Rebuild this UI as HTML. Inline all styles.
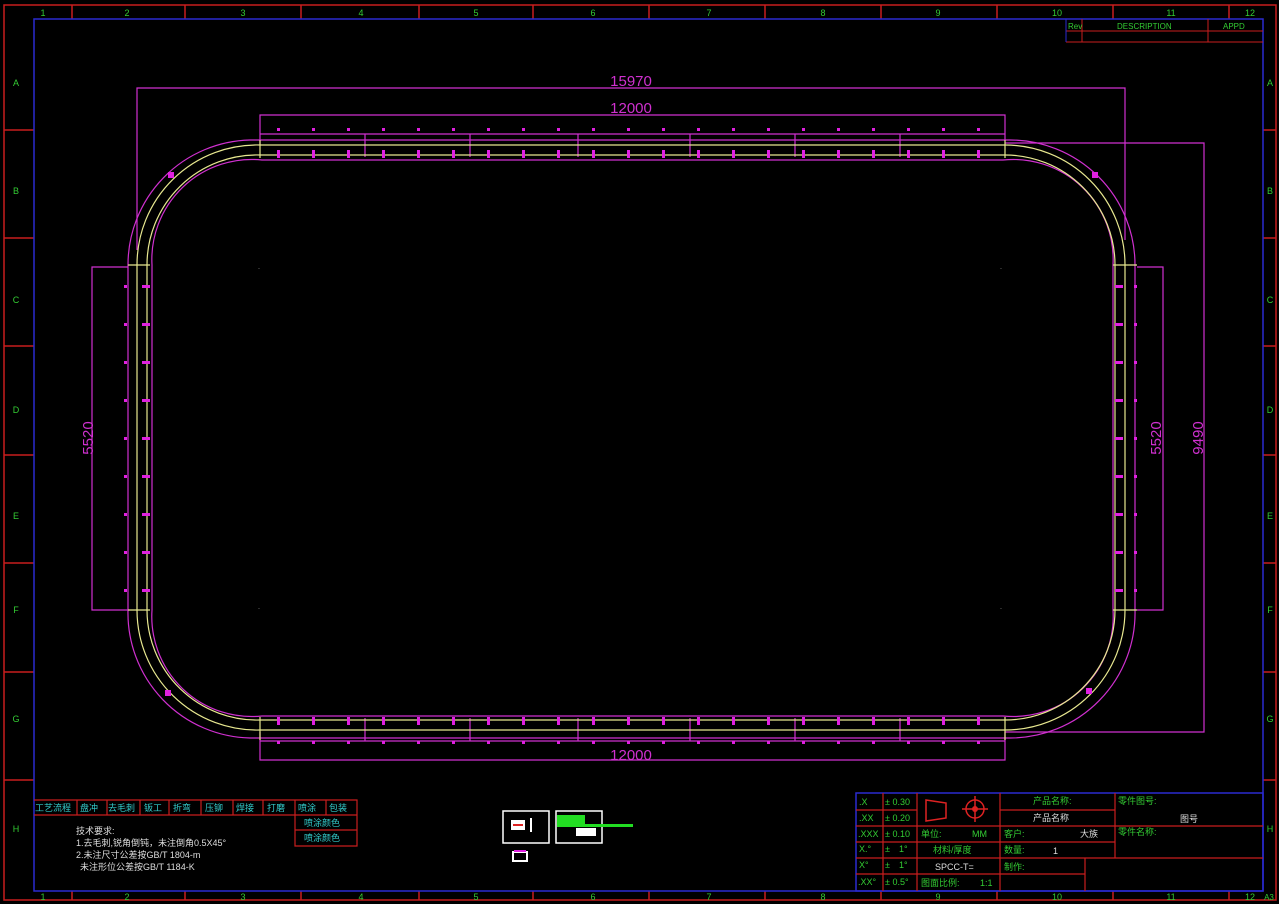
<!DOCTYPE html>
<html><head><meta charset="utf-8"><style>
html,body{margin:0;padding:0;background:#000;width:1279px;height:904px;overflow:hidden}
svg{display:block}
text{font-family:"Liberation Sans","Noto Sans CJK SC",sans-serif}
</style></head><body>
<svg width="1279" height="904" viewBox="0 0 1279 904" xmlns="http://www.w3.org/2000/svg">
<defs>
<pattern id="tk" x="260" y="0" width="35" height="904" patternUnits="userSpaceOnUse">
<rect x="17" y="0" width="3" height="904" fill="#e020e0"/>
</pattern>
<pattern id="tkv" x="0" y="267" width="904" height="38" patternUnits="userSpaceOnUse">
<rect x="0" y="18" width="904" height="3" fill="#e020e0"/>
</pattern>
</defs>
<rect width="1279" height="904" fill="#000"/>
<!-- outer red frame -->
<g stroke="#c81e1e" stroke-width="1.5" fill="none">
<rect x="4" y="5" width="1272" height="895"/>
<path d="M72 5V19M185 5V19M301 5V19M419 5V19M533 5V19M649 5V19M765 5V19M881 5V19M997 5V19M1113 5V19M1229 5V19"/>
<path d="M72 891V900M185 891V900M301 891V900M419 891V900M533 891V900M649 891V900M765 891V900M881 891V900M997 891V900M1113 891V900M1229 891V900"/>
<path d="M4 130H34M4 238H34M4 346H34M4 455H34M4 563H34M4 672H34M4 780H34"/>
<path d="M1263 130H1276M1263 238H1276M1263 346H1276M1263 455H1276M1263 563H1276M1263 672H1276M1263 780H1276"/>
</g>
<rect x="34" y="19" width="1229" height="872" fill="none" stroke="#2a2ad0" stroke-width="1.5"/>
<g fill="#3c3" font-size="9" text-anchor="middle">
<text x="43" y="16">1</text><text x="127" y="16">2</text><text x="243" y="16">3</text><text x="361" y="16">4</text><text x="476" y="16">5</text><text x="593" y="16">6</text><text x="709" y="16">7</text><text x="823" y="16">8</text><text x="938" y="16">9</text><text x="1057" y="16">10</text><text x="1171" y="16">11</text><text x="1250" y="16">12</text>
<text x="43" y="900">1</text><text x="127" y="900">2</text><text x="243" y="900">3</text><text x="361" y="900">4</text><text x="476" y="900">5</text><text x="593" y="900">6</text><text x="709" y="900">7</text><text x="823" y="900">8</text><text x="938" y="900">9</text><text x="1057" y="900">10</text><text x="1171" y="900">11</text><text x="1250" y="900">12</text><text x="1269" y="900" font-size="8">A3</text>
<text x="16" y="86">A</text><text x="16" y="194">B</text><text x="16" y="303">C</text><text x="16" y="413">D</text><text x="16" y="519">E</text><text x="16" y="613">F</text><text x="16" y="722">G</text><text x="16" y="832">H</text>
<text x="1270" y="86">A</text><text x="1270" y="194">B</text><text x="1270" y="303">C</text><text x="1270" y="413">D</text><text x="1270" y="519">E</text><text x="1270" y="613">F</text><text x="1270" y="722">G</text><text x="1270" y="832">H</text>
</g>
<!-- rev table -->
<g stroke="#c81e1e" stroke-width="1" fill="none">
<path d="M1066 31H1263M1066 42H1263M1082 19V42M1208 19V42"/>
</g>
<path d="M1066 19V42" stroke="#2a2ad0"/>
<g fill="#3c3" font-size="8"><text x="1068" y="29">Rev</text><text x="1117" y="29">DESCRIPTION</text><text x="1223" y="29">APPD</text></g>

<!-- dimension boxes magenta -->
<g stroke="#d030d0" stroke-width="1.2" fill="none">
<path d="M137 250V88H1125V240"/>
<path d="M260 145V115H1005V140"/>
<path d="M260 134H1005"/>
<path d="M1005 143H1204V732H1005"/>
<path d="M128 267H92V610H128"/>
<path d="M1137 267H1163V610H1137"/>
<path d="M260 732V760H1005V732"/>
<path d="M260 741H1005"/>
<!-- magenta shell outer/inner -->
<path d="M250 140H1010 A125 125 0 0 1 1135 265V610 A125 125 0 0 1 1010 738H250 A125 125 0 0 1 128 610V265 A125 125 0 0 1 250 140Z"/>
<path d="M262 160H1003 A100 100 0 0 1 1113 265V610 A100 100 0 0 1 1003 716H262 A100 100 0 0 1 152 610V265 A100 100 0 0 1 262 160Z"/>
<path d="M365 134V157M470 134V157M578 134V157M690 134V157M795 134V157M900 134V157"/>
<path d="M365 718V741M470 718V741M578 718V741M690 718V741M795 718V741M900 718V741"/>
</g>
<!-- yellow profile -->
<g stroke="#e8e890" stroke-width="1.2" fill="none">
<path d="M260 145H1005 A120 120 0 0 1 1125 265V610 A120 120 0 0 1 1005 730H260 A120 120 0 0 1 137 610V265 A120 120 0 0 1 260 145Z"/>
<path d="M260 155H1005 A110 110 0 0 1 1115 265V610 A110 110 0 0 1 1005 720H260 A110 110 0 0 1 147 610V265 A110 110 0 0 1 260 155Z"/>
<path d="M260 140V158M1005 140V158M260 717V740M1005 717V740M128 265H150M1113 265H1137M128 610H150M1113 610H1137"/>
</g>
<!-- tick marks -->
<rect x="262" y="150" width="741" height="8" fill="url(#tk)"/>
<rect x="262" y="128" width="741" height="3" fill="url(#tk)"/>
<rect x="262" y="717" width="741" height="8" fill="url(#tk)"/>
<rect x="262" y="741" width="741" height="3" fill="url(#tk)"/>
<rect x="142" y="270" width="8" height="338" fill="url(#tkv)"/>
<rect x="124" y="270" width="3" height="338" fill="url(#tkv)"/>
<rect x="1115" y="270" width="8" height="338" fill="url(#tkv)"/>
<rect x="1134" y="270" width="3" height="338" fill="url(#tkv)"/>
<g fill="#e020e0"><rect x="168" y="172" width="6" height="6"/><rect x="1092" y="172" width="6" height="6"/><rect x="165" y="690" width="6" height="6"/><rect x="1086" y="688" width="6" height="6"/></g>
<!-- dimension text -->
<g fill="#d030d0" font-size="15" text-anchor="middle">
<text x="631" y="86">15970</text>
<text x="631" y="113">12000</text>
<text x="631" y="760">12000</text>
<text transform="translate(93 438) rotate(-90)">5520</text>
<text transform="translate(1161 438) rotate(-90)">5520</text>
<text transform="translate(1203 438) rotate(-90)">9490</text>
</g>
<g fill="#ddd" font-size="6"><text x="258" y="270">·</text><text x="1000" y="270">·</text><text x="258" y="610">·</text><text x="1000" y="610">·</text></g>

<!-- bottom-left table -->
<g stroke="#c81e1e" stroke-width="1.2" fill="none">
<path d="M34 800H357V846H295V800M34 815H357M295 830H357"/>
<path d="M77 800V815M107 800V815M140 800V815M169 800V815M201 800V815M233 800V815M263 800V815M326 800V815"/>
</g>
<g fill="#3cc" font-size="9">
<text x="35" y="811">工艺流程</text><text x="80" y="811">盘冲</text><text x="108" y="811">去毛刺</text><text x="144" y="811">钣工</text><text x="173" y="811">折弯</text><text x="205" y="811">压铆</text><text x="236" y="811">焊接</text><text x="267" y="811">打磨</text><text x="298" y="811">喷涂</text><text x="329" y="811">包装</text>
<text x="304" y="826">喷涂颜色</text><text x="304" y="841">喷涂颜色</text>
</g>
<g fill="#ddd" font-size="9">
<text x="76" y="834">技术要求:</text>
<text x="76" y="846">1.去毛刺,锐角倒钝，未注倒角0.5X45°</text>
<text x="76" y="858">2.未注尺寸公差按GB/T 1804-m</text>
<text x="80" y="870">未注形位公差按GB/T 1184-K</text>
</g>
<!-- small icons -->
<rect x="503" y="811" width="46" height="32" fill="none" stroke="#fff" stroke-width="1.5"/>
<rect x="511" y="820" width="14" height="10" fill="#fff"/><rect x="513" y="824" width="10" height="2" fill="#d22"/><rect x="530" y="818" width="2" height="14" fill="#fff"/>
<rect x="556" y="811" width="46" height="32" fill="none" stroke="#fff" stroke-width="1.5"/>
<rect x="557" y="815" width="28" height="12" fill="#2d2"/><rect x="557" y="824" width="76" height="3" fill="#2d2"/>
<rect x="576" y="828" width="20" height="8" fill="#fff"/>
<rect x="513" y="852" width="14" height="9" fill="none" stroke="#fff" stroke-width="2"/><rect x="514" y="850" width="12" height="2" fill="#e020e0"/>

<!-- title block -->
<rect x="856" y="793" width="407" height="98" fill="none" stroke="#2a2ad0" stroke-width="1.5"/>
<g stroke="#c81e1e" stroke-width="1.2" fill="none">
<path d="M856 810H917M856 826H1263M856 842H1115M856 858H1263M856 874H1085"/>
<path d="M1000 810H1115"/>
<path d="M883 793V891M917 793V891M1000 793V891M1115 793V858M1085 858V891"/>
</g>
<path d="M926 800L946 803V818L926 821Z" fill="none" stroke="#d22" stroke-width="1.5"/>
<circle cx="975" cy="809" r="9" fill="none" stroke="#d22" stroke-width="1.5"/><circle cx="975" cy="809" r="3" fill="#d22"/><path d="M962 809H988M975 796V822" stroke="#d22" stroke-width="1.5"/>
<g fill="#3c3" font-size="9">
<text x="859" y="805">.X</text><text x="885" y="805">± 0.30</text>
<text x="859" y="821">.XX</text><text x="885" y="821">± 0.20</text>
<text x="858" y="837">.XXX</text><text x="885" y="837">± 0.10</text>
<text x="859" y="852">X.°</text><text x="885" y="852">±　1°</text>
<text x="859" y="868">X°</text><text x="885" y="868">±　1°</text>
<text x="858" y="885">.XX°</text><text x="885" y="885">± 0.5°</text>
<text x="921" y="837">单位:</text><text x="972" y="837">MM</text>
<text x="933" y="853">材料/厚度</text>
<text x="921" y="886">图面比例:</text><text x="980" y="886">1:1</text>
<text x="1033" y="804">产品名称:</text>
<text x="1004" y="837">客户:</text>
<text x="1004" y="853">数量:</text>
<text x="1004" y="870">制作:</text>
<text x="1118" y="804">零件图号:</text>
<text x="1118" y="835">零件名称:</text>
</g>
<g fill="#ddd" font-size="9">
<text x="935" y="870">SPCC-T=</text>
<text x="1033" y="821">产品名称</text>
<text x="1080" y="837">大族</text>
<text x="1053" y="854">1</text>
<text x="1180" y="822">图号</text>
</g>
</svg>
</body></html>
